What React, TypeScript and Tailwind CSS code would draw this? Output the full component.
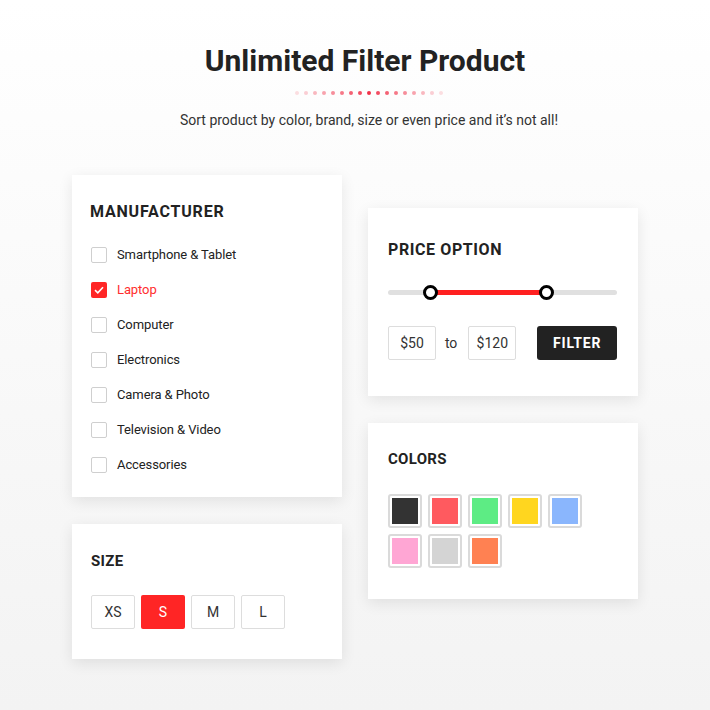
import React from "react";

const items = [
  "Smartphone & Tablet",
  "Laptop",
  "Computer",
  "Electronics",
  "Camera & Photo",
  "Television & Video",
  "Accessories",
];

const swatches = ["#333333", "#ff5a5f", "#5dec84", "#ffd61f", "#8ab6fd", "#ffa6d4", "#d4d4d4", "#ff8152"];

const dotOpacity = [0.15, 0.22, 0.32, 0.42, 0.52, 0.62, 0.72, 0.82, 0.95, 0.82, 0.72, 0.62, 0.52, 0.42, 0.32, 0.22, 0.15];

export default function App() {
  return (
    <div
      className="w-[710px] h-[710px] bg-gradient-to-b from-[#ffffff] to-[#f3f3f3] overflow-hidden"
      style={{ fontFamily: "Roboto, 'Liberation Sans', sans-serif" }}
    >
      <div className="flex flex-col items-center pt-[41px]">
        <h1 className="pl-[20px] text-[30px] leading-[40px] font-bold text-[#222] tracking-[0px]">Unlimited Filter Product</h1>
        <div className="flex gap-[5px] mt-[10px] pl-[27px]">
          {dotOpacity.map((o, i) => (
            <span key={i} className="w-[4px] h-[4px] rounded-full bg-[#f0263f]" style={{ opacity: o }} />
          ))}
        </div>
        <p className="pl-[28px] mt-[15px] text-[14px] leading-[20px] text-[#333]">
          Sort product by color, brand, size or even price and it’s not all!
        </p>
      </div>

      <div className="flex gap-[26px] pl-[72px] mt-[45px]">
        <div className="flex flex-col gap-[27px] w-[270px]">
          <div className="bg-white shadow-[0_4px_14px_rgba(0,0,0,0.09)] h-[322px] pt-[27px] px-[18px]">
            <h2 className="text-[16px] leading-[20px] font-bold text-[#222] tracking-[0.8px]">MANUFACTURER</h2>
            <div className="mt-[25px] flex flex-col gap-[19px]">
              {items.map((it) => {
                const checked = it === "Laptop";
                return (
                  <div key={it} className="flex items-center h-[16px]">
                    <span
                      className={
                        checked
                          ? "w-[16px] h-[16px] ml-[1px] rounded-[2px] bg-[#ff2626] flex items-center justify-center"
                          : "w-[16px] h-[16px] ml-[1px] rounded-[2px] border border-[#cfcfcf] bg-white"
                      }
                    >
                      {checked && (
                        <svg width="10" height="8" viewBox="0 0 10 8">
                          <path d="M1 4.2 L3.8 6.8 L9 1.2" stroke="#fff" strokeWidth="1.6" fill="none" />
                        </svg>
                      )}
                    </span>
                    <span
                      className={
                        checked
                          ? "ml-[10px] text-[13px] text-[#ff2e2e] tracking-[-0.1px]"
                          : "ml-[10px] text-[13px] text-[#222] tracking-[-0.1px]"
                      }
                    >
                      {it}
                    </span>
                  </div>
                );
              })}
            </div>
          </div>

          <div className="bg-white shadow-[0_4px_14px_rgba(0,0,0,0.09)] h-[135px] pt-[27px] px-[19px]">
            <h2 className="text-[15px] leading-[20px] font-bold text-[#222] tracking-[0.3px]">SIZE</h2>
            <div className="flex gap-[6px] mt-[24px]">
              {["XS", "S", "M", "L"].map((s) => (
                <div
                  key={s}
                  className={
                    s === "S"
                      ? "w-[44px] h-[34px] rounded-[2px] bg-[#ff2525] text-white text-[14px] flex items-center justify-center"
                      : "w-[44px] h-[34px] rounded-[2px] border border-[#dddddd] bg-white text-[#333] text-[14px] flex items-center justify-center"
                  }
                >
                  {s}
                </div>
              ))}
            </div>
          </div>
        </div>

        <div className="flex flex-col gap-[27px] w-[270px] mt-[33px]">
          <div className="bg-white shadow-[0_4px_14px_rgba(0,0,0,0.09)] h-[188px] pt-[32px] pl-[20px] pr-[21px]">
            <h2 className="text-[16px] leading-[20px] font-bold text-[#222] tracking-[0.6px]">PRICE OPTION</h2>
            <div className="relative mt-[30px] h-[5px] bg-[#e0e0e0] rounded-full">
              <div className="absolute left-[43px] w-[116px] top-0 h-[5px] bg-[#ff2020]" />
              <div className="absolute left-[35px] top-[-5px] w-[15px] h-[15px] rounded-full border-[3px] border-black bg-white" />
              <div className="absolute left-[151px] top-[-5px] w-[15px] h-[15px] rounded-full border-[3px] border-black bg-white" />
            </div>
            <div className="flex items-center mt-[31px]">
              <div className="w-[48px] h-[34px] border border-[#dddddd] rounded-[2px] flex items-center justify-center text-[14px] text-[#333]">
                $50
              </div>
              <span className="ml-[9px] text-[14px] text-[#333]">to</span>
              <div className="ml-[11px] w-[48px] h-[34px] border border-[#dddddd] rounded-[2px] flex items-center justify-center text-[14px] text-[#333]">
                $120
              </div>
              <div className="ml-[21px] w-[80px] h-[34px] bg-[#222] rounded-[3px] flex items-center justify-center text-white text-[14px] font-bold tracking-[0.8px]">
                FILTER
              </div>
            </div>
          </div>

          <div className="bg-white shadow-[0_4px_14px_rgba(0,0,0,0.09)] h-[176px] pt-[26px] px-[20px]">
            <h2 className="text-[15px] leading-[20px] font-bold text-[#222] tracking-[0.3px]">COLORS</h2>
            <div className="grid grid-cols-[repeat(5,34px)] gap-[6px] mt-[25px]">
              {swatches.map((c) => (
                <div key={c} className="w-[34px] h-[34px] border-2 border-[#dadada] rounded-[3px] p-[2px] bg-white">
                  <div className="w-full h-full" style={{ backgroundColor: c }} />
                </div>
              ))}
            </div>
          </div>
        </div>
      </div>
    </div>
  );
}
